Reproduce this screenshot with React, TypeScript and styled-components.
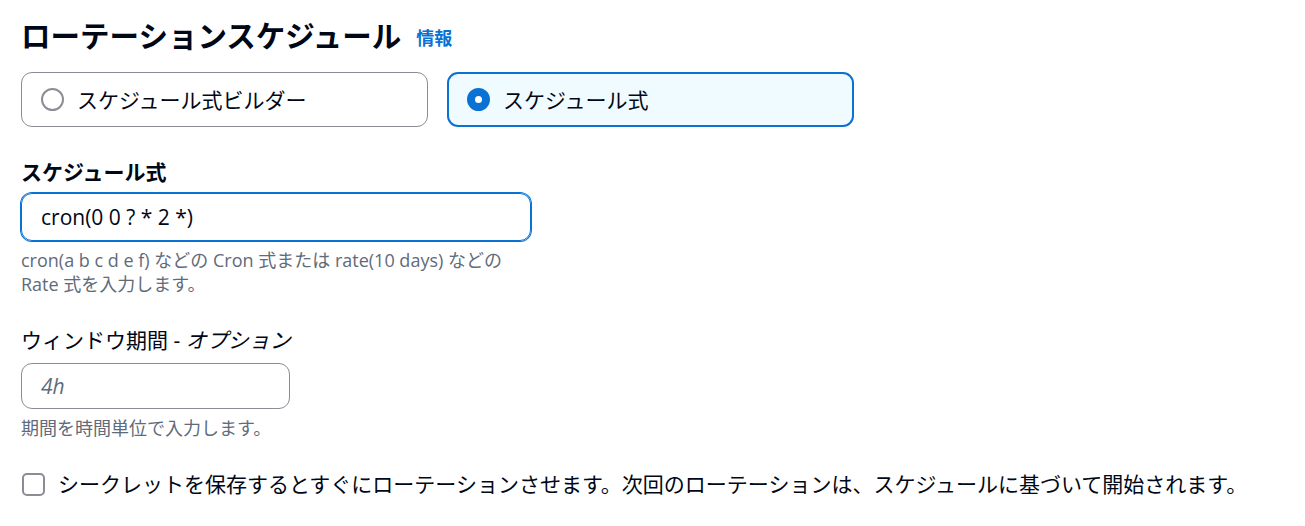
import React from 'react';
import styled, { createGlobalStyle } from 'styled-components';

const GlobalStyle = createGlobalStyle`
  body {
    margin: 0;
    background: #ffffff;
    color: #000716;
    font-family: 'Open Sans', 'Noto Sans CJK JP', sans-serif;
    font-size: 21px;
    line-height: 28px;
  }
`;

const Page = styled.div`
  display: flex;
  flex-direction: column;
  padding: 18px 0 0 21px;
`;

const Heading = styled.h2`
  display: flex;
  align-items: center;
  gap: 15px;
  height: 36px;
  margin: 0 0 18px;
  font-size: 29.5px;
  line-height: 36px;
  font-weight: 700;
`;

const InfoLink = styled.a`
  padding-top: 4px;
  font-size: 18px;
  line-height: 24px;
  font-weight: 700;
  color: #0972d3;
  text-decoration: none;
`;

const Tiles = styled.div`
  display: flex;
  gap: 19px;
`;

const Tile = styled.label<{ $selected?: boolean }>`
  box-sizing: border-box;
  display: flex;
  align-items: center;
  gap: 13px;
  width: 407px;
  height: 55px;
  border-radius: 11px;
  border: ${(p) => (p.$selected ? '2px solid #0972d3' : '1px solid #8c8c94')};
  padding-left: ${(p) => (p.$selected ? '18px' : '19px')};
  background: ${(p) => (p.$selected ? '#f0fbff' : '#ffffff')};
`;

const Radio = styled.span<{ $checked?: boolean }>`
  box-sizing: border-box;
  flex: none;
  width: 23px;
  height: 23px;
  border-radius: 50%;
  border: ${(p) => (p.$checked ? '8px solid #0972d3' : '2px solid #8c8c94')};
  background: #ffffff;
`;

const Label = styled.div<{ $bold?: boolean; $top: number }>`
  margin-top: ${(p) => p.$top}px;
  font-weight: ${(p) => (p.$bold ? 700 : 400)};

  em {
    font-style: italic;
  }
`;

const Input = styled.div<{ $focused?: boolean; $width: number; $height: number; $top: number }>`
  box-sizing: border-box;
  display: flex;
  align-items: center;
  width: ${(p) => p.$width}px;
  height: ${(p) => p.$height}px;
  margin-top: ${(p) => p.$top}px;
  padding-left: 19px;
  border-radius: 11px;
  border: 1px solid ${(p) => (p.$focused ? '#0972d3' : '#8c8c94')};
  box-shadow: ${(p) => (p.$focused ? '0 0 0 1px #0972d3' : 'none')};
`;

const Placeholder = styled.span`
  color: #5f6b7a;
  font-style: italic;
`;

const Hint = styled.div`
  margin-top: 7px;
  width: 490px;
  font-size: 18px;
  line-height: 24px;
  color: #5f6b7a;
`;

const CheckRow = styled.label`
  display: flex;
  align-items: center;
  gap: 13px;
  margin-top: 30px;
  padding-left: 1px;
`;

const Checkbox = styled.span`
  box-sizing: border-box;
  flex: none;
  width: 23px;
  height: 23px;
  border: 2px solid #8c8c94;
  border-radius: 5px;
  background: #ffffff;
`;

const App = () => {
  return (
    <>
      <GlobalStyle />
      <Page>
        <Heading>
          ローテーションスケジュール
          <InfoLink>情報</InfoLink>
        </Heading>
        <Tiles>
          <Tile>
            <Radio />
            スケジュール式ビルダー
          </Tile>
          <Tile $selected>
            <Radio $checked />
            スケジュール式
          </Tile>
        </Tiles>

        <Label $bold $top={31}>スケジュール式</Label>
        <Input $focused $width={510} $height={48} $top={7}>
          cron(0 0 ? * 2 *)
        </Input>
        <Hint>
          cron(a b c d e f) などの Cron 式または rate(10 days) などの Rate 式を入力します。
        </Hint>

        <Label $top={30}>
          ウィンドウ期間 - <em>オプション</em>
        </Label>
        <Input $width={269} $height={46} $top={9}>
          <Placeholder>4h</Placeholder>
        </Input>
        <Hint>期間を時間単位で入力します。</Hint>

        <CheckRow>
          <Checkbox />
          シークレットを保存するとすぐにローテーションさせます。次回のローテーションは、スケジュールに基づいて開始されます。
        </CheckRow>
      </Page>
    </>
  );
};

export default App;
